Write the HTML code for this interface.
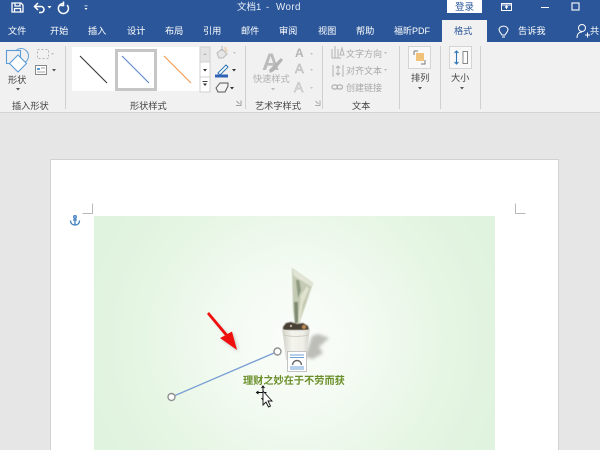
<!DOCTYPE html>
<html><head><meta charset="utf-8">
<style>
html,body{margin:0;padding:0;width:600px;height:450px;overflow:hidden;background:#e6e6e6}
svg{display:block;filter:blur(.35px)}
text{font-family:"Liberation Sans","Noto Sans CJK SC",sans-serif;font-size:9.2px;fill:#444;white-space:pre}
.w{fill:#fff}
.g{fill:#a8a8a8;font-size:9px}
</style></head><body>
<svg width="600" height="450" viewBox="0 0 600 450" xmlns="http://www.w3.org/2000/svg">
<defs>
<radialGradient id="bg" gradientUnits="userSpaceOnUse" cx="295" cy="340" r="215">
<stop offset="0" stop-color="#fbfdfa"/><stop offset=".3" stop-color="#f4fbf3"/><stop offset=".7" stop-color="#e6f6e4"/><stop offset="1" stop-color="#dff3de"/>
</radialGradient>
<linearGradient id="pot" x1="0" x2="1"><stop offset="0" stop-color="#cfcfc6"/><stop offset=".35" stop-color="#f4f4ee"/><stop offset=".75" stop-color="#efefe8"/><stop offset="1" stop-color="#d2d2c8"/></linearGradient>
<filter id="b1"><feGaussianBlur stdDeviation="1.5"/></filter>
<filter id="b2"><feGaussianBlur stdDeviation=".6"/></filter>
</defs>
<!-- background -->
<rect width="600" height="450" fill="#e6e6e6"/>
<rect y="0" width="600" height="42" fill="#2b579a"/>
<rect y="42" width="600" height="70" fill="#f1f1f1"/>
<rect y="112" width="600" height="1" fill="#d4d4d4"/>
<!-- QAT -->
<g fill="none" stroke="#fff" stroke-width="1.3">
<path d="M12 3h9l2 2v7H12zM15 3v3h5V3M14.500 12V8.500h6V12"/>
<path d="M35 6.500h6a3 3 0 0 1 0 6h-2M38 3l-3.500 3.500L38 10" stroke-width="1.500"/>
<path d="M63 3.500a5 5 0 1 0 4 1.500M63.500 1.500v4h-3" stroke-width="1.500"/>
</g>
<path d="M47.500 6h4l-2 2.500zM84.500 8h3l-1.500 2zM84.500 5.500h3v.8h-3z" fill="#fff"/>
<!-- Title -->
<text x="237" y="10" style="font-size:9.500px;fill:#e8eef7">文档1</text>
<text x="266" y="10" style="font-size:9.500px;fill:#e8eef7">-</text>
<text x="276" y="10" style="font-size:9.800px;fill:#e8eef7;letter-spacing:.4px">Word</text>
<!-- sign in -->
<rect x="447" y="0" width="35" height="13" fill="#fff"/>
<text x="455" y="10" style="fill:#2b579a;font-size:9.500px">登录</text>
<g fill="none" stroke="#fff">
<rect x="501.500" y="3.500" width="10" height="7"/><path d="M501.500 5h10M506.500 6v3M505 7.500l1.500-1.500 1.500 1.500"/>
<path d="M541 7.500h8"/>
<rect x="572" y="3" width="7" height="7" stroke-width="1.100"/>
</g>
<!-- Tabs -->
<g>
<text class="w" x="8" y="34">文件</text>
<text class="w" x="50" y="34">开始</text>
<text class="w" x="88" y="34">插入</text>
<text class="w" x="127" y="34">设计</text>
<text class="w" x="165" y="34">布局</text>
<text class="w" x="203" y="34">引用</text>
<text class="w" x="241" y="34">邮件</text>
<text class="w" x="279" y="34">审阅</text>
<text class="w" x="318" y="34">视图</text>
<text class="w" x="356" y="34">帮助</text>
<text class="w" x="394" y="34" style="font-size:9px">福昕PDF</text>
<text class="w" x="518" y="34">告诉我</text>
<text class="w" x="590" y="34">共</text>
</g>
<rect x="442" y="20" width="45" height="23" fill="#f1f1f1"/>
<text x="454" y="34" style="fill:#2b579a">格式</text>
<g fill="none" stroke="#fff" stroke-width="1">
<path d="M502 35c-1-2-3-3-3-6a5 5 0 0 1 9 0c0 3-2 4-3 6zM502 37h3"/>
<circle cx="582" cy="28" r="3.500"/><path d="M577 38c0-4 2-6 5-6M585 35h5M587.500 32.500v5"/>
</g>
<!-- separators -->
<g fill="#d0d0d0">
<rect x="65" y="46" width="1" height="63"/>
<rect x="245" y="46" width="1" height="63"/>
<rect x="322" y="46" width="1" height="63"/>
<rect x="399" y="46" width="1" height="63"/>
<rect x="440" y="46" width="1" height="63"/>
<rect x="480" y="46" width="1" height="63"/>
</g>
<!-- insert shapes -->
<g fill="none" stroke="#5b9bd5" stroke-width="1.100">
<circle cx="21" cy="56" r="7.500" stroke="#6ea6d8"/>
<rect x="6.500" y="50.500" width="14" height="13" fill="#f1f1f1"/>
<path d="M18 55l8.500 8.500L18 72l-8.500-8.500z" fill="#fff"/>
</g>
<text x="8" y="83">形状</text>
<path d="M16 88h4l-2 2.500z" fill="#555"/>
<text x="12" y="109">插入形状</text>
<g fill="none" stroke="#b4b4b4"><rect x="37.500" y="49.500" width="11" height="9" stroke-dasharray="2 2"/></g>
<path d="M51 53h3l-1.500 2z" fill="#c0c0c0"/>
<rect x="35.500" y="65.500" width="11" height="9" fill="#fff" stroke="#888"/>
<path d="M37 68h3v2h-3z" fill="#5b9bd5"/><path d="M41 68h4M37 72h8" stroke="#a0a0a0"/>
<path d="M52 69h4l-2 2.500z" fill="#555"/>
<!-- gallery -->
<rect x="72" y="47" width="128" height="44" fill="#fff"/>
<rect x="116.500" y="50.500" width="39" height="39" fill="#fff" stroke="#c6c6c6" stroke-width="3"/>
<path d="M80 56l27 27" stroke="#333" stroke-width="1.100"/>
<path d="M122 56l27 27" stroke="#5b84c8" stroke-width="1.100"/>
<path d="M164 56l27 27" stroke="#f09a52" stroke-width="1.100"/>
<rect x="200" y="47" width="10" height="15" fill="#e4e4e4" stroke="#d0d0d0"/>
<rect x="200" y="62" width="10" height="15" fill="#fff" stroke="#d0d0d0"/>
<rect x="200" y="77" width="10" height="15" fill="#fff" stroke="#d0d0d0"/>
<path d="M203 55h4l-2-2z" fill="#b8b8b8"/><path d="M203 69h4l-2 2.500z" fill="#333"/><path d="M202.500 81.500h5" stroke="#444"/><path d="M203 83.500h4l-2 2.500z" fill="#333"/>
<text x="130" y="109">形状样式</text>
<!-- fill outline effects -->
<path d="M217 53l5-4 5 5-4 4h-4z" fill="#e6e6e6" stroke="#b8b8b8"/>
<path d="M222 46v5" stroke="#b8b8b8"/>
<path d="M224 47h2l2 5h-3z" fill="#e8c79a" opacity=".6"/>
<path d="M233 52h3l-1.500 2z" fill="#c4c4c4"/>
<path d="M218 73l8-8 2 2-8 8z" fill="#fff" stroke="#2e75b6"/>
<rect x="215" y="74.500" width="13" height="3" fill="#2e62b8"/>
<path d="M232 69h4l-2 2.500z" fill="#333"/>
<path d="M216 88l4-5h8v3l-3 6h-7z" fill="#f4f4f4" stroke="#555"/>
<path d="M230 87h4l-2 2.500z" fill="#333"/>
<path d="M236 105.500h5v-5M239.500 104l-3-3" stroke="#888" fill="none" stroke-width=".8"/>
<!-- word art -->
<text x="262" y="70" style="font-size:24px;font-weight:bold;fill:#bcbcbc">A</text>
<path d="M269 70l12-12 2 2-9 11-4 2z" fill="#b4b4b4"/>
<text class="g" x="253" y="82" style="fill:#b0b0b0;font-size:9.200px">快速样式</text>
<path d="M271 88h4l-2 2.500z" fill="#bbb"/>
<text x="295" y="57" style="font-size:12px;font-weight:bold;fill:#b4b4b4">A</text>
<text x="295" y="73" style="font-size:13px;fill:#d8d8d8;stroke:#b4b4b4;stroke-width:.5">A</text>
<text x="294" y="92" style="font-size:14px;fill:#ececec;stroke:#b4b4b4;stroke-width:.5">A</text>
<path d="M310 53h3l-1.500 2zM310 69h3l-1.500 2zM310 87h3l-1.500 2z" fill="#c4c4c4"/>
<text x="255" y="109">艺术字样式</text>
<path d="M315 105.500h5v-5M318.500 104l-3-3" stroke="#999" fill="none" stroke-width=".8"/>
<!-- text group -->
<path d="M332 49v9M335 46v12M338 49v9M332 58h9M342 48l-2 7h4z" stroke="#b4b4b4" fill="none"/>
<text x="346" y="57" class="g">文字方向</text>
<path d="M384 52h3l-1.500 2z" fill="#bbb"/>
<path d="M333 65v11h1M343 65v11h-1M338 66v9M336 68l2-2 2 2M336 73l2 2 2-2" stroke="#b4b4b4" fill="none"/>
<text x="346" y="74" class="g">对齐文本</text>
<path d="M384 69h3l-1.500 2z" fill="#bbb"/>
<rect x="332" y="85" width="5.500" height="4" rx="2" fill="none" stroke="#b0b0b0" stroke-width="1.200"/>
<rect x="337" y="85" width="5.500" height="4" rx="2" fill="none" stroke="#b0b0b0" stroke-width="1.200"/>
<text x="346" y="91" class="g">创建链接</text>
<text x="352" y="109">文本</text>
<!-- arrange -->
<rect x="408.500" y="46.500" width="22" height="22" fill="#f8f8f8" stroke="#d4d4d4"/>
<path d="M414 51h4M414 51v4M425 60v4h-4" stroke="#777" fill="none"/>
<rect x="416" y="53" width="8" height="8" fill="#f0c27a"/>
<text x="411" y="81">排列</text>
<path d="M418 87h4l-2 2.500z" fill="#555"/>
<!-- size -->
<rect x="449.500" y="46.500" width="22" height="22" fill="#f8f8f8" stroke="#d4d4d4"/>
<rect x="463" y="51.500" width="4.500" height="12" fill="#fff" stroke="#888"/>
<path d="M456.500 51v12.500M454.500 53l2-2 2 2M454.500 62l2 2 2-2" fill="none" stroke="#2e75b6" stroke-width="1.100"/>
<text x="451" y="81">大小</text>
<path d="M460 87h4l-2 2.500z" fill="#555"/>
<!-- page -->
<rect x="50.500" y="159.500" width="508" height="300" fill="#fff" stroke="#d2d2d2"/>
<path d="M82.500 213.500h10v-10M515.500 203.500v10h10" fill="none" stroke="#b8b8b8"/>
<g fill="none" stroke="#3f7fc0" stroke-width="1.300">
<circle cx="75" cy="217" r="1.300"/><path d="M75 218.500v6.500M70.500 220.500c0 3 2 4.500 4.500 4.500s4.500-1.500 4.500-4.500M73 220h4"/>
</g>
<!-- picture -->
<rect x="94" y="216" width="401" height="234" fill="url(#bg)"/>
<!-- shadow -->
<path d="M312 336l6-2 11 4-10 9 4 6-10 6-8-2z" fill="#a9a9a2" filter="url(#b1)" opacity=".75"/>
<!-- bill -->
<path d="M292 268l21 15-7 21-7 20-4 0-2-14z" fill="#c4cab4" filter="url(#b2)"/>
<path d="M292 268l21 15-1 4-18-11z" fill="#e2e5d6" filter="url(#b2)"/>
<path d="M296 280l3 0 2 10-3 8z" fill="#8e9a80" filter="url(#b2)"/>
<path d="M301 295l6-9 2 3-6 14-3 20h-2z" fill="#dfe3d0" filter="url(#b2)"/>
<path d="M294 302l4 0 0 20-3 2z" fill="#7f8b72" filter="url(#b2)"/>
<!-- soil -->
<path d="M283 327l3-4 5-1 6 2 6-1 5 3 1 4H283z" fill="#4a3f36" filter="url(#b2)"/>
<circle cx="304" cy="327" r="2.200" fill="#c08a55" filter="url(#b2)"/>
<circle cx="291" cy="326" r="1.200" fill="#b8b0a0"/>
<!-- pot -->
<path d="M282 329q14 4 28 0l-1 6-3 25h-20l-3-25z" fill="url(#pot)"/>
<path d="M283 335q13 3 26 0" stroke="#c8c8be" fill="none" stroke-width=".8"/>
<!-- text in image -->
<text x="243" y="384" style="font-size:10.200px;font-weight:bold;fill:#6a8f2a">理财之妙在于不劳而获</text>
<!-- layout button -->
<rect x="287.500" y="351.500" width="19" height="20" fill="#fff" stroke="#c4c4c4"/>
<path d="M290 355h14M290 357.500h14M290 367h14M290 369h14" stroke="#6c9fd6" stroke-width=".9"/>
<path d="M292.500 365a4.500 4.500 0 0 1 9 0" fill="none" stroke="#666" stroke-width="1.400"/>
<!-- red arrow -->
<path d="M208 313l19 21 5-2 5 18-17-12 5-2z" fill="#666" opacity=".35" filter="url(#b1)" transform="translate(1.500 1.500)"/>
<path d="M207 314l2-2 18.500 22 4.500-2.500 5 18.500-17-12 5-2.500z" fill="#f00f0f"/>
<!-- line selection -->
<path d="M171.500 397L277.500 351.500" stroke="#7a9fd4" stroke-width="1.300"/>
<circle cx="171.500" cy="397" r="3.500" fill="#fff" stroke="#909090" stroke-width="1.400"/>
<circle cx="277.500" cy="351.500" r="3.500" fill="#fff" stroke="#909090" stroke-width="1.400"/>
<!-- cursor -->
<path d="M263 386.500v13M256.500 392.500h10M261.500 388l1.500-2 1.500 2M261.500 398l1.500 2 1.500-2M258.500 391l-2 1.500 2 1.500" stroke="#111" fill="none"/>
<path d="M263 391v14l3-3 2.500 5 2-1-2.500-5h4z" fill="#fff" stroke="#111" stroke-width=".9"/>
</svg>
</body></html>
